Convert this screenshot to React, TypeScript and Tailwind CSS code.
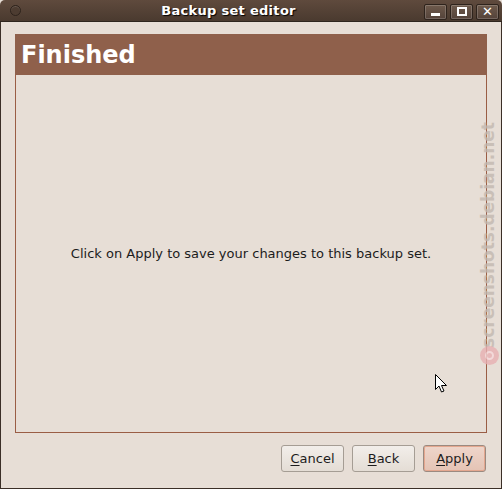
const font = { fontFamily: '"DejaVu Sans", sans-serif' };

const WinBtn = ({ children }: { children: React.ReactNode }) => (
  <div className="w-[23px] h-[16px] rounded-[2px] border border-[#2e231c] bg-gradient-to-b from-[#6e5a4c] to-[#54433a] shadow-[inset_0_0_0_1px_rgba(255,255,255,0.18)] flex items-center justify-center">
    {children}
  </div>
);

const Button = ({ u, rest, primary }: { u: string; rest: string; primary?: boolean }) => (
  <div
    className={
      'h-[27px] w-[63px] rounded-[3px] border flex items-center justify-center text-[13px] text-[#1c1c1c] ' +
      (primary
        ? 'border-[#9b8a80] bg-gradient-to-b from-[#efd6cb] to-[#e4c3b4] shadow-[inset_0_0_0_1px_#e4a78f]'
        : 'border-[#a59d94] bg-gradient-to-b from-[#f2eeea] to-[#e4ddd5]')
    }
  >
    <span>
      <span className="underline underline-offset-2">{u}</span>
      {rest}
    </span>
  </div>
);

export default function App() {
  return (
    <div className="w-[502px] h-[489px] flex flex-col bg-[#e7ded6] overflow-hidden relative" style={font}>
      {/* title bar */}
      <div className="h-[22px] shrink-0 rounded-t-[5px] bg-gradient-to-b from-[#5f4a3d] to-[#4a3a2f] border-b border-[#2f251e] flex items-center px-2 relative">
        <div className="w-[11px] h-[11px] rounded-full border border-[#2e231c] bg-[#4d3c31] shadow-[inset_0_1px_0_rgba(255,255,255,0.15)] ml-[2px]" />
        <div className="absolute left-0 right-[45px] top-0 h-[22px] flex items-center justify-center text-[13px] font-bold text-white tracking-[0.3px] [text-shadow:1px_1px_1px_#000]">
          Backup set editor
        </div>
        <div className="ml-auto flex gap-[3px] mr-[-5px] mt-[2px]">
          <WinBtn>
            <div className="w-[9px] h-[3px] bg-white mt-[6px]" />
          </WinBtn>
          <WinBtn>
            <div className="w-[10px] h-[9px] border-2 border-white" />
          </WinBtn>
          <WinBtn>
            <span className="text-white font-bold text-[13px] leading-none">✕</span>
          </WinBtn>
        </div>
      </div>

      {/* body */}
      <div className="flex-1 flex flex-col border-x border-b border-[#3b2f27] px-[14px] pt-[12px] pb-[16px]">
        <div className="h-[41px] bg-[#8f604b] flex items-center px-[6px]">
          <span className="text-white font-bold text-[24px] leading-none">Finished</span>
        </div>
        <div className="h-[358px] border border-t-0 border-[#9a5d45] flex items-center justify-center">
          <span className="text-[13px] text-[#1c1c1c] mt-[0px]">Click on Apply to save your changes to this backup set.</span>
        </div>
        <div className="flex justify-end gap-[8px] mt-[12px] pr-[1px]">
          <Button u="C" rest="ancel" />
          <Button u="B" rest="ack" />
          <Button u="A" rest="pply" primary />
        </div>
      </div>

      {/* watermark */}
      <div className="absolute left-[489px] top-[235px] -translate-x-1/2 -translate-y-1/2 -rotate-90 whitespace-nowrap text-[17px] font-bold text-[#c2b8b0] opacity-80">
        screenshots.debian.net
      </div>
      <div className="absolute left-[480px] top-[346px] w-[19px] h-[19px] rounded-full bg-[#e8b0b3] flex items-center justify-center opacity-80">
        <div className="w-[9px] h-[9px] rounded-full border-2 border-[#f6d8da]" />
      </div>

      {/* cursor */}
      <svg className="absolute left-[435px] top-[374px]" width="13" height="20" viewBox="0 0 13 20">
        <path d="M0.5 0.5 L0.5 15.5 L4 12 L6.5 18 L9 17 L6.5 11.5 L11.5 11.5 Z" fill="#fff" stroke="#000" strokeWidth="1" />
      </svg>
    </div>
  );
}
